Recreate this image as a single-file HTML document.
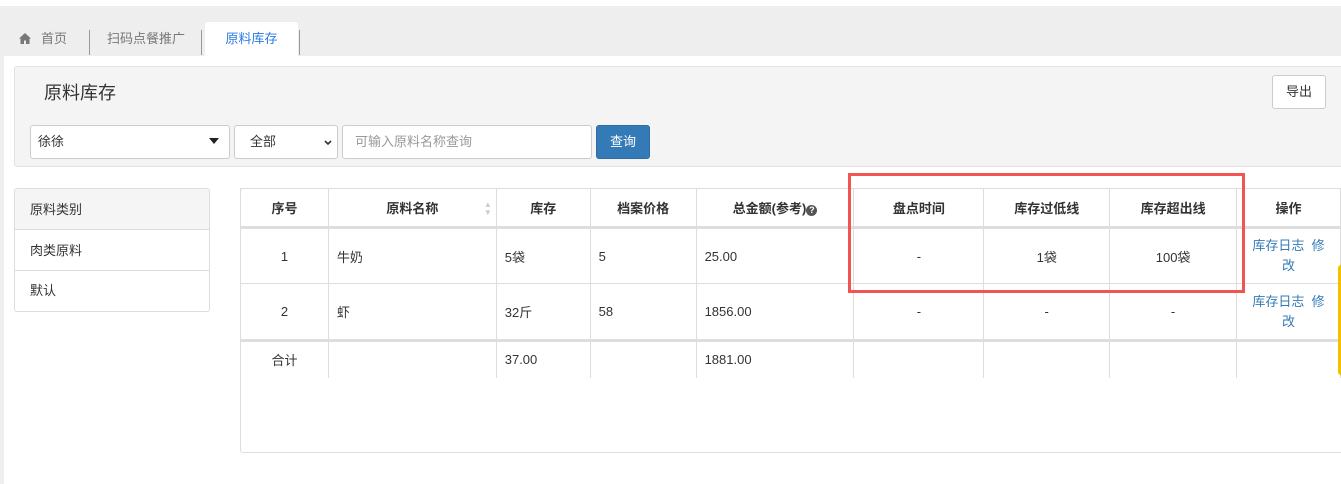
<!DOCTYPE html>
<html><head><meta charset="utf-8"><style>
*{box-sizing:border-box;margin:0;padding:0}
body{width:1341px;height:484px;overflow:hidden;background:#fff;font-family:"Liberation Sans","Noto Sans CJK SC",sans-serif;font-size:13px;color:#333;position:relative}
.a{position:absolute}
.tabbar{left:0;top:6px;width:1341px;height:50px;background:#eee}
.lstrip{left:0;top:56px;width:4px;height:428px;background:#eee}
.tab{top:22px;height:34px;line-height:34px;font-size:13px;color:#777}
.sep{top:30px;width:1px;height:25px;background:#999}
.panel{left:14px;top:66px;width:1340px;height:101px;background:#f4f4f4;border:1px solid #e2e2e2;border-radius:3px}
.inp{height:34px;border:1px solid #ccc;border-radius:3px;background:#fff;line-height:32px;font-size:13px}
table{border-collapse:collapse;position:absolute;left:240px;top:188px;table-layout:fixed}
td,th{border:1px solid #ddd;font-size:13px;padding:0 8px}
th{height:39px;font-weight:bold;text-align:center;border-bottom:3px solid #ddd}
td.c{text-align:center}
.lk{color:#337ab7}
tr.tot td{border-bottom:none}
</style></head><body>
<div class="a tabbar"></div>
<div class="a lstrip"></div>
<svg class="a" style="left:19px;top:33px" width="12" height="11" viewBox="0 0 12 11"><path d="M6 0L0 5.5h1.5V11h3.5V7.5h2V11h3.5V5.5H12z" fill="#777"/></svg>
<div class="a tab" style="left:41px">首页</div>
<div class="a sep" style="left:89px"></div>
<div class="a tab" style="left:107px">扫码点餐推广</div>
<div class="a sep" style="left:201px"></div>
<div class="a" style="left:205px;top:22px;width:93px;height:34px;background:#fff;border-radius:3px 3px 0 0;line-height:34px;text-align:center;color:#2a7ae2">原料库存</div>
<div class="a sep" style="left:299px"></div>
<div class="a panel"></div>
<div class="a" style="left:44px;top:79px;font-size:18px;color:#333">原料库存</div>
<div class="a inp" style="left:1272px;top:75px;width:54px;height:34px;text-align:center;line-height:32px">导出</div>
<div class="a inp" style="left:30px;top:125px;width:200px;padding-left:7px">徐徐<svg style="position:absolute;right:10px;top:12px" width="10" height="6"><path d="M0 0h10L5 6z" fill="#222"/></svg></div>
<div class="a inp" style="left:234px;top:125px;width:104px;padding-left:15px">全部<svg style="position:absolute;right:5px;top:14px" width="8" height="6"><path d="M1 1l3 3 3-3" stroke="#333" stroke-width="1.6" fill="none"/></svg></div>
<div class="a inp" style="left:342px;top:125px;width:250px;padding-left:12px;color:#999">可输入原料名称查询</div>
<div class="a" style="left:596px;top:125px;width:54px;height:34px;background:#337ab7;border:1px solid #2e6da4;border-radius:3px;color:#fff;text-align:center;line-height:32px">查询</div>
<div class="a" style="left:14px;top:188px;width:196px;height:124px;border:1px solid #ddd;border-radius:3px;overflow:hidden">
<div style="height:41px;line-height:41px;padding-left:15px;background:#f5f5f5;border-bottom:1px solid #ddd">原料类别</div>
<div style="height:41px;line-height:41px;padding-left:15px;border-bottom:1px solid #ddd">肉类原料</div>
<div style="height:40px;line-height:40px;padding-left:15px">默认</div>
</div>
<div class="a" style="left:240px;top:188px;width:1110px;height:265px;border:1px solid #ddd;border-radius:3px"></div>
<table>
<colgroup><col style="width:88px"><col style="width:168px"><col style="width:94px"><col style="width:106px"><col style="width:158px"><col style="width:130px"><col style="width:126px"><col style="width:127px"><col style="width:104px"></colgroup>
<tr><th>序号</th><th style="position:relative">原料名称<span style="position:absolute;right:4px;top:12px;font-size:8px;color:#ccc;line-height:8px">▲<br>▼</span></th><th>库存</th><th>档案价格</th><th>总金额(参考)<span style="display:inline-block;width:11px;height:11px;border-radius:50%;background:#555;color:#fff;font-size:9px;line-height:11px">?</span></th><th>盘点时间</th><th>库存过低线</th><th>库存超出线</th><th>操作</th></tr>
<tr style="height:56px"><td class="c">1</td><td>牛奶</td><td>5袋</td><td>5</td><td>25.00</td><td class="c">-</td><td class="c">1袋</td><td class="c">100袋</td><td class="c lk" style="line-height:20px">库存日志&nbsp; 修<br>改</td></tr>
<tr style="height:57px"><td class="c">2</td><td>虾</td><td>32斤</td><td>58</td><td>1856.00</td><td class="c">-</td><td class="c">-</td><td class="c">-</td><td class="c lk" style="line-height:20px">库存日志&nbsp; 修<br>改</td></tr>
<tr class="tot" style="height:37px;border-top:3px solid #ddd"><td class="c">合计</td><td></td><td>37.00</td><td></td><td>1881.00</td><td></td><td></td><td></td><td></td></tr>
</table>
<div class="a" style="left:848px;top:173px;width:397px;height:120px;border:3px solid #f25353"></div>
<div class="a" style="left:1338px;top:265px;width:4px;height:110px;background:#f5c000;border-radius:3px 0 0 3px"></div>
</body></html>
